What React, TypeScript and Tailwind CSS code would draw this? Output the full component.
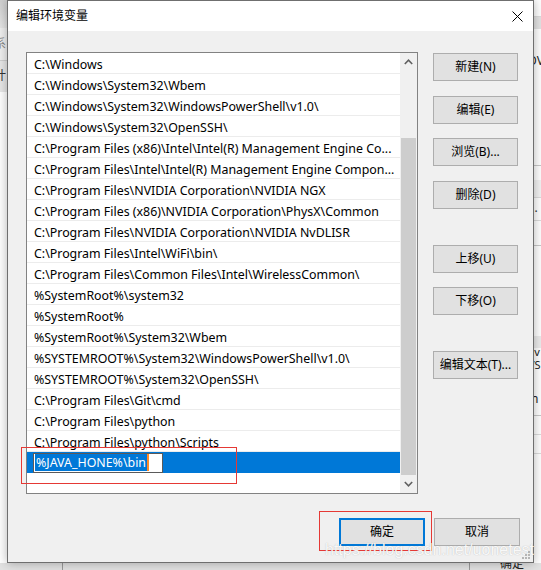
import React from "react";

const rows: string[] = [
  "C:\\Windows",
  "C:\\Windows\\System32\\Wbem",
  "C:\\Windows\\System32\\WindowsPowerShell\\v1.0\\",
  "C:\\Windows\\System32\\OpenSSH\\",
  "C:\\Program Files (x86)\\Intel\\Intel(R) Management Engine Co...",
  "C:\\Program Files\\Intel\\Intel(R) Management Engine Compon...",
  "C:\\Program Files\\NVIDIA Corporation\\NVIDIA NGX",
  "C:\\Program Files (x86)\\NVIDIA Corporation\\PhysX\\Common",
  "C:\\Program Files\\NVIDIA Corporation\\NVIDIA NvDLISR",
  "C:\\Program Files\\Intel\\WiFi\\bin\\",
  "C:\\Program Files\\Common Files\\Intel\\WirelessCommon\\",
  "%SystemRoot%\\system32",
  "%SystemRoot%",
  "%SystemRoot%\\System32\\Wbem",
  "%SYSTEMROOT%\\System32\\WindowsPowerShell\\v1.0\\",
  "%SYSTEMROOT%\\System32\\OpenSSH\\",
  "C:\\Program Files\\Git\\cmd",
  "C:\\Program Files\\python",
  "C:\\Program Files\\python\\Scripts",
];

function Btn({ label, className }: { label: string; className: string }) {
  return (
    <div
      className={`flex h-[28px] items-center justify-center border border-[#adadad] bg-[#e1e1e1] text-[12px] leading-none text-black ${className}`}
    >
      {label}
    </div>
  );
}

export default function App() {
  return (
    <div className="relative h-[570px] w-[541px] overflow-hidden bg-white font-['Noto_Sans','Noto_Sans_CJK_SC',sans-serif] text-black">
      <div className="flex h-[563px]">
        {/* left background strip */}
        <div className="flex w-[7px] flex-col overflow-hidden">
          <div className="h-[28px] bg-gradient-to-b from-[#cfcfcf] to-[#e6e6e6]" />
          <div className="h-[32px] overflow-hidden bg-[#f0f0f0] text-[12px] leading-[32px] text-[#888]">
            <div className="ml-[-6px] w-[13px] overflow-hidden whitespace-nowrap">系</div>
          </div>
          <div className="h-[32px] overflow-hidden border-t border-[#d0d0d0] bg-[#e8e8e8] text-[12px] leading-[30px] text-[#333]">
            <div className="ml-[-6px] w-[13px] overflow-hidden whitespace-nowrap">计</div>
          </div>
          <div className="flex-1 bg-white" />
        </div>

        {/* dialog */}
        <div className="z-10 flex h-[563px] w-[527px] flex-col border border-[#6f6f6f] bg-[#f0f0f0] shadow-[0_0_10px_rgba(0,0,0,0.3)]">
          {/* title bar */}
          <div className="flex h-[30px] items-center justify-between bg-white pl-[8px] pr-[10px]">
            <span className="text-[12px] leading-none">编辑环境变量</span>
            <svg width="11" height="11" viewBox="0 0 11 11">
              <path d="M0.5 0.5 L10.5 10.5 M10.5 0.5 L0.5 10.5" stroke="#000" strokeWidth="1" />
            </svg>
          </div>

          {/* body */}
          <div className="flex flex-1 flex-col pl-[18px] pt-[21px]">
            <div className="flex">
              {/* list box */}
              <div className="flex h-[442px] w-[392px] border border-[#828282] bg-white">
                <div className="flex w-[373px] flex-col">
                  {rows.map((r, i) => (
                    <div
                      key={i}
                      className="h-[21px] overflow-hidden whitespace-nowrap border-b border-[#ececec] pl-[7px] pt-[2px] text-[12.4px] leading-[19px]"
                    >
                      {r}
                    </div>
                  ))}
                  <div className="flex h-[21px] items-center bg-[#0078d7] pl-[6px]">
                    <div className="flex h-[20px] w-[130px] items-center border border-[#5a5a5a] bg-white pl-[1px]">
                      <span className="bg-[#0078d7] pl-[1px] pr-[1px] pt-[1px] text-[12.4px] leading-[16px] text-white">
                        %JAVA_HONE%\bin
                      </span>
                      <span className="h-[17px] w-[2px] bg-[#ff8a28]" />
                    </div>
                  </div>
                </div>
                {/* scrollbar */}
                <div className="flex w-[17px] flex-col bg-[#f0f0f0]">
                  <div className="flex h-[17px] items-center justify-center">
                    <svg width="9" height="6" viewBox="0 0 9 6">
                      <path d="M0.8 5 L4.5 1.2 L8.2 5" fill="none" stroke="#606060" strokeWidth="1.6" />
                    </svg>
                  </div>
                  <div className="h-[68px]" />
                  <div className="mx-[1px] h-[337px] bg-[#cdcdcd]" />
                  <div className="flex flex-1 items-center justify-center">
                    <svg width="9" height="6" viewBox="0 0 9 6">
                      <path d="M0.8 1 L4.5 4.8 L8.2 1" fill="none" stroke="#606060" strokeWidth="1.6" />
                    </svg>
                  </div>
                </div>
              </div>

              {/* right buttons */}
              <div className="ml-[15px] flex w-[85px] flex-col">
                <Btn label="新建(N)" className="mt-[1px]" />
                <Btn label="编辑(E)" className="mt-[15px]" />
                <Btn label="浏览(B)..." className="mt-[14px]" />
                <Btn label="删除(D)" className="mt-[15px]" />
                <Btn label="上移(U)" className="mt-[36px]" />
                <Btn label="下移(O)" className="mt-[14px]" />
                <Btn label="编辑文本(T)..." className="mt-[36px]" />
              </div>
            </div>

            {/* bottom buttons */}
            <div className="mt-[24px] flex justify-end gap-[9px] pr-[13px]">
              <div className="flex h-[28px] w-[86px] items-center justify-center border-2 border-[#0078d7] bg-[#e1e1e1] text-[12px] leading-none">
                确定
              </div>
              <Btn label="取消" className="w-[86px]" />
            </div>
          </div>
        </div>

        {/* right background strip */}
        <div className="flex flex-1 flex-col overflow-hidden bg-white text-[12px] leading-none text-[#222]">
          <div className="h-[17px] border-b border-[#dcdcdc]" />
          <div className="h-[12px] bg-[#e4e4e4]" />
          <div className="mt-[26px] ml-[-6px] whitespace-nowrap">DV</div>
          <div className="mt-[98px] h-[1px] bg-[#c8c8c8]" />
          <div className="mt-[14px] h-[18px] border-b border-[#dcdcdc] bg-[#f3f3f3]" />
          <div className="ml-[-6px] mt-[4px] text-[#333]">...</div>
          <div className="mt-[6px] h-[1px] bg-[#dcdcdc]" />
          <div className="mt-[24px] h-[1px] bg-[#c8c8c8]" />
          <div className="mt-[90px] h-[12px] bg-[#ececec]" />
          <div className="ml-[-6px] mt-[-2px] h-[12px] overflow-hidden whitespace-nowrap text-[11px]">av</div>
          <div className="ml-[-6px] mt-[1px] h-[12px] overflow-hidden whitespace-nowrap text-[11px]">VS</div>
          <div className="ml-[-6px] mt-[22px]">in</div>
          <div className="mt-[10px] h-[1px] bg-[#c8c8c8]" />
          <div className="mt-[18px] h-[1px] bg-[#dcdcdc]" />
          <div className="mt-[18px] h-[1px] bg-[#dcdcdc]" />
        </div>
      </div>

      {/* bottom background strip */}
      <div className="flex h-[7px] bg-[#e2e2e2]">
        <div className="w-[62px]" />
        <div className="w-[407px] border-l border-[#9a9a9a]" />
        <div className="flex-1 overflow-hidden border-l border-[#9a9a9a]">
          <div className="ml-[30px] mt-[-5px] text-[12px] leading-none text-[#222]">确定</div>
        </div>
      </div>

      {/* red annotation rectangles */}
      <div className="pointer-events-none absolute left-[21px] top-[447px] z-20 h-[37px] w-[216px] border border-[#e53935]" />
      <div className="pointer-events-none absolute left-[319px] top-[511px] z-20 h-[40px] w-[113px] border border-[#e53935]" />

      {/* watermark */}
      <div className="pointer-events-none absolute left-[325px] top-[542px] z-20 font-['Liberation_Sans',sans-serif] text-[16px] leading-none text-[rgba(255,255,255,0.92)] [text-shadow:0_0_1px_rgba(120,120,120,0.5)]">
        https://blog.csdn.net/uonetest
      </div>

      {/* resize grip */}
      <svg className="pointer-events-none absolute left-[522px] top-[551px] z-20" width="9" height="9" viewBox="0 0 9 9">
        <rect x="6" y="0" width="2" height="2" fill="#b5b5b5" />
        <rect x="3" y="3" width="2" height="2" fill="#b5b5b5" />
        <rect x="6" y="3" width="2" height="2" fill="#b5b5b5" />
        <rect x="0" y="6" width="2" height="2" fill="#b5b5b5" />
        <rect x="3" y="6" width="2" height="2" fill="#b5b5b5" />
        <rect x="6" y="6" width="2" height="2" fill="#b5b5b5" />
      </svg>
    </div>
  );
}
